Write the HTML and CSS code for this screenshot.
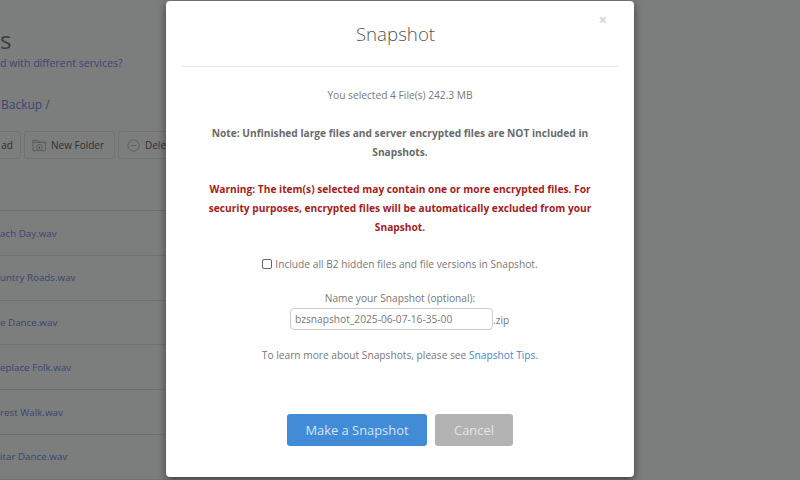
FILE: index.html
```html
<!DOCTYPE html>
<html lang="en">
<head>
<meta charset="utf-8">
<title>Snapshot</title>
<link rel="stylesheet" href="styles.css">
</head>
<body>
<main class="page">
  <h1 class="page-title">s</h1>
  <a class="help-link">d with different services?</a>
  <div class="crumbs"><a>Backup</a> /</div>
  <div class="toolbar">
    <button class="tool tool-first">ad</button>
    <button class="tool tool-folder">
      <svg class="tool-icon" viewBox="0 0 16 16" aria-hidden="true"><path d="M1 4.5V2.5h5l1 2h7v2M1 4.5h13.5v9H1z" fill="none" stroke="#5a5b5c"/><circle cx="8" cy="10" r="3.2" fill="#7c7d7d" stroke="#5a5b5c"/><path d="M8 8.4v3.2M6.4 10h3.2" stroke="#5a5b5c"/></svg>
      New Folder
    </button>
    <button class="tool tool-delete">
      <svg class="tool-icon" viewBox="0 0 16 16" aria-hidden="true"><circle cx="8" cy="8" r="6" fill="none" stroke="#5a5b5c"/><path d="M5 8h6" stroke="#5a5b5c"/></svg>
      Delete
    </button>
  </div>
  <ul class="files">
    <li><a>ach Day.wav</a></li>
    <li><a>untry Roads.wav</a></li>
    <li><a>e Dance.wav</a></li>
    <li><a>eplace Folk.wav</a></li>
    <li><a>rest Walk.wav</a></li>
    <li><a>itar Dance.wav</a></li>
  </ul>
</main>

<section class="modal" role="dialog" aria-label="Snapshot">
  <header class="modal-head">
    <h2>Snapshot</h2>
    <span class="close">×</span>
  </header>
  <div class="modal-body">
    <p class="selected">You selected 4 File(s) 242.3 MB</p>
    <p class="note">Note: Unfinished large files and server encrypted files are NOT included in Snapshots.</p>
    <p class="warning">Warning: The item(s) selected may contain one or more encrypted files. For security purposes, encrypted files will be automatically excluded from your Snapshot.</p>
    <label class="hidden-opt"><span class="check"></span>Include all B2 hidden files and file versions in Snapshot.</label>
    <div class="name-label">Name your Snapshot (optional):</div>
    <div class="name-row"><span class="name-input">bzsnapshot_2025-06-07-16-35-00</span><span class="ext">.zip</span></div>
    <p class="tips">To learn more about Snapshots, please see <a>Snapshot Tips</a>.</p>
  </div>
  <footer class="modal-foot">
    <button class="btn btn-primary">Make a Snapshot</button>
    <button class="btn btn-cancel">Cancel</button>
  </footer>
</section>
</body>
</html>
```

FILE: styles.css
```css
* { box-sizing: border-box; }
html, body { margin: 0; height: 100%; }
body {
  width: 800px;
  height: 480px;
  overflow: hidden;
  position: relative;
  background: #7c7d7d;
  font-family: "Open Sans", "Liberation Sans", sans-serif;
}
a { color: #3a4672; }

.page { height: 480px; overflow: hidden; }
.page-title {
  margin: 0;
  padding-top: 26px;
  height: 53px;
  font-size: 24px;
  line-height: 28px;
  font-weight: 400;
  color: #3a3b3d;
}
.help-link { display: block; font-size: 10.6px; line-height: 20px; }
.crumbs {
  margin-top: 22px;
  padding-left: 1px;
  font-size: 12px;
  line-height: 20px;
  color: #3a4672;
}
.toolbar { display: flex; gap: 3px; margin-top: 16px; margin-left: -41px; }
.tool {
  display: flex;
  align-items: center;
  gap: 4px;
  height: 28px;
  padding: 0 7px;
  border: 1px solid #727373;
  border-radius: 3px;
  background: #7c7d7d;
  font: 400 10px "Open Sans", sans-serif;
  color: #2f3032;
  white-space: nowrap;
}
.tool-first { width: 62px; justify-content: flex-end; }
.tool-folder { width: 91px; }
.tool-delete { width: 100px; }
.tool-icon { width: 15px; height: 15px; flex: none; }
.files {
  list-style: none;
  margin: 51px 0 0;
  padding: 0;
  width: 167px;
  border-top: 1px solid #6f6f70;
}
.files li {
  height: 44.8px;
  padding-top: 13.5px;
  border-bottom: 1px solid #736f70;
  font-size: 9.8px;
  line-height: 18px;
  white-space: nowrap;
}

.modal {
  position: absolute;
  left: 166px;
  top: 1px;
  width: 468px;
  height: 476px;
  display: flex;
  flex-direction: column;
  background: #fff;
  border-radius: 4px;
  box-shadow: 0 3px 9px rgba(0,0,0,.5);
  color: #777;
}
.modal-head {
  position: relative;
  margin: 0 15px;
  height: 66px;
  padding-right: 9px;
  border-bottom: 1px solid #e5e5e5;
  text-align: center;
}
.modal-head h2 {
  margin: 0;
  padding-top: 19px;
  font-size: 18.7px;
  line-height: 27px;
  font-weight: 300;
  color: #555;
}
.close {
  position: absolute;
  right: 12px;
  top: 8px;
  font-size: 15px;
  line-height: 20px;
  font-weight: 700;
  color: #d4d4d4;
}
.modal-body {
  flex: 1;
  padding: 19px 30px 0;
  text-align: center;
  font-size: 10.2px;
  line-height: 19px;
}
.modal-body p { margin: 0; }
.modal-body .note { margin-top: 19px; font-weight: 700; color: #6a6a6a; }
.modal-body .warning { margin-top: 18px; font-weight: 700; color: #a51c1c; }
.hidden-opt {
  display: flex;
  justify-content: center;
  align-items: center;
  gap: 3px;
  margin-top: 17px;
  height: 20px;
}
.check {
  width: 10px;
  height: 10px;
  border: 1px solid #666;
  border-radius: 2px;
  background: #fff;
}
.name-label { margin-top: 15px; }
.name-row { display: flex; justify-content: center; align-items: flex-end; }
.name-input {
  width: 203px;
  height: 22px;
  padding: 0 4px;
  border: 1px solid #ccc;
  border-radius: 4px;
  line-height: 20px;
  text-align: left;
}
.ext { line-height: 20px; width: 17px; text-align: left; }
.modal-body .tips { margin-top: 16px; }
.tips a { color: #3f87c9; }
.modal-foot {
  display: flex;
  justify-content: center;
  gap: 8px;
  padding: 0 0 31px;
}
.btn {
  height: 32px;
  border: 1px solid transparent;
  border-radius: 3px;
  font: 400 12.9px "Open Sans", sans-serif;
  color: #fff;
}
.btn-primary { width: 140px; background: #428bd7; color: #d5e5f5; }
.btn-cancel { width: 78px; background: #b3b3b3; color: #e4e4e4; }
```
